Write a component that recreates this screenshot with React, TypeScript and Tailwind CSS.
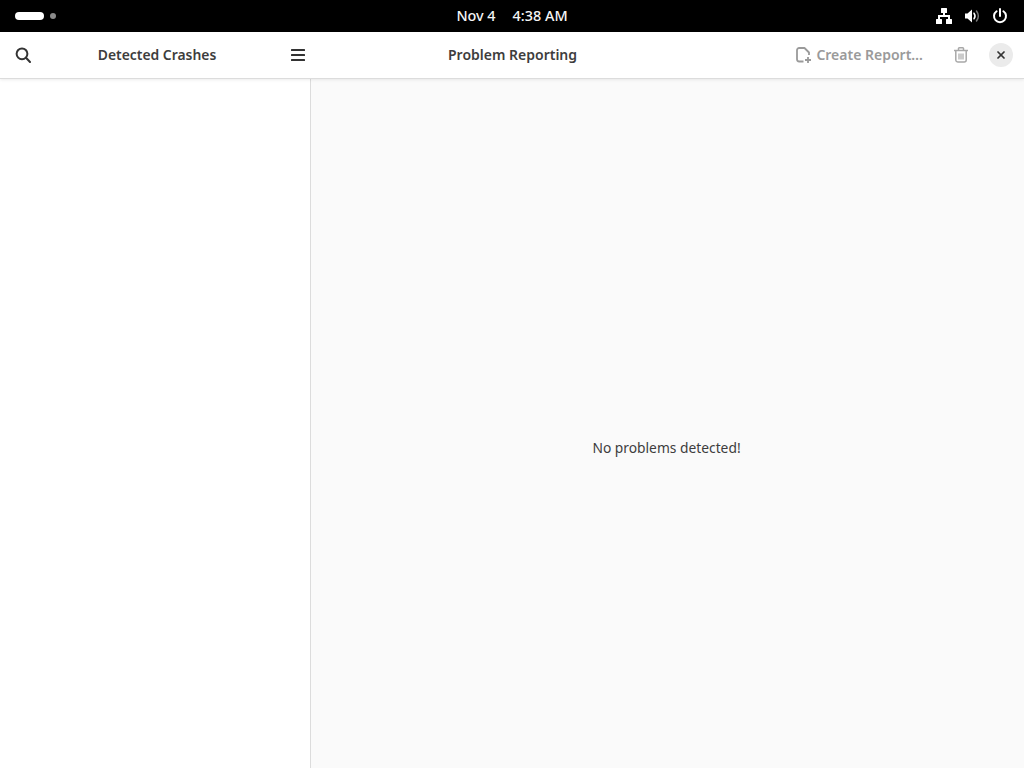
import { X } from "lucide-react";

const NetworkIcon = () => (
  <svg width="16" height="16" viewBox="0 0 16 16" fill="#fff">
    <rect x="5" y="0" width="6" height="5" rx="0.5" />
    <rect x="0" y="11" width="6" height="5" rx="0.5" />
    <rect x="10" y="11" width="6" height="5" rx="0.5" />
    <rect x="7" y="5" width="2" height="3" />
    <rect x="2" y="7" width="12" height="2" />
    <rect x="2" y="8" width="2" height="3" />
    <rect x="12" y="8" width="2" height="3" />
  </svg>
);

const VolumeIcon = () => (
  <svg width="16" height="16" viewBox="0 0 16 16" fill="none">
    <path d="M1 5.5h2.5L8 1.5v13l-4.5-4H1z" fill="#fff" />
    <path d="M10 5.2c1.2 1.6 1.2 4 0 5.6" stroke="#fff" strokeWidth="1.5" strokeLinecap="round" />
    <path d="M12.5 3c2.2 3 2.2 7 0 10" stroke="#777" strokeWidth="1.5" strokeLinecap="round" />
  </svg>
);

const PowerIcon = () => (
  <svg width="16" height="16" viewBox="0 0 16 16" fill="none" stroke="#fff" strokeWidth="2">
    <path d="M8 1v7" strokeLinecap="round" />
    <path d="M4.6 3.2a6 6 0 1 0 6.8 0" strokeLinecap="round" />
  </svg>
);

const SearchIcon = () => (
  <svg width="16" height="16" viewBox="0 0 16 16" fill="none" stroke="#333" strokeWidth="2">
    <circle cx="7" cy="6.8" r="5.4" />
    <path d="M11 10.8l4 4.2" strokeLinecap="round" />
  </svg>
);

const MenuIcon = () => (
  <svg width="14" height="12" viewBox="0 0 14 12" fill="#333">
    <rect y="0" width="14" height="2" rx="0.5" />
    <rect y="5" width="14" height="2" rx="0.5" />
    <rect y="10" width="14" height="2" rx="0.5" />
  </svg>
);

const NewReportIcon = () => (
  <svg width="16" height="16" viewBox="0 0 16 16" fill="none" stroke="#9a9a9a" strokeWidth="1.8">
    <path d="M7.5 14.5H3.2A2.2 2.2 0 0 1 1 12.3V3.2A2.2 2.2 0 0 1 3.2 1h5.3l4.5 4.5V8" strokeLinejoin="round" />
    <path d="M12 10v6M9 13h6" />
  </svg>
);

const TrashIcon = () => (
  <svg width="16" height="16" viewBox="0 0 16 16" fill="none" stroke="#a8a8a8" strokeWidth="1.5">
    <path d="M1 3.5h14" />
    <path d="M5.5 3V1.5a.7.7 0 0 1 .7-.7h3.6a.7.7 0 0 1 .7.7V3" />
    <path d="M2.8 4v9.2A2 2 0 0 0 4.8 15h6.4a2 2 0 0 0 2-2V4" />
    <path d="M6 6.5v6M8 6.5v6M10 6.5v6" strokeWidth="1.2" />
  </svg>
);

export default function App() {
  return (
    <div className="w-[1024px] h-[768px] overflow-hidden flex flex-col bg-white font-['Noto_Sans','Open_Sans',sans-serif] text-[#3d3d3d]">
      <div className="h-8 bg-black text-white grid grid-cols-[1fr_auto_1fr] items-center shrink-0">
        <div className="flex items-center gap-[6px] pl-[15px]">
          <div className="w-[29px] h-[8px] rounded-full bg-white" />
          <div className="w-[6px] h-[6px] rounded-full bg-[#8a8a8a]" />
        </div>
        <div className="flex gap-[17px] text-[14.4px] font-medium text-[#f5f5f5]">
          <span>Nov 4</span>
          <span>4:38 AM</span>
        </div>
        <div className="flex items-center justify-end gap-3 pr-4">
          <NetworkIcon />
          <VolumeIcon />
          <PowerIcon />
        </div>
      </div>
      <div className="h-[47px] flex shrink-0 border-b border-[#dcdcdc] shadow-[0_1px_3px_rgba(0,0,0,0.08)] z-10 bg-white">
        <div className="w-[311px] shrink-0 flex items-center justify-between pl-[15px]">
          <SearchIcon />
          <span className="text-[13.9px] font-semibold mr-[8px]">Detected Crashes</span>
          <button className="w-[20px] h-8 flex items-center justify-start">
            <MenuIcon />
          </button>
        </div>
        <div className="flex-1 flex items-center justify-between pl-[137px] pr-[11px]">
          <span className="text-[14px] font-semibold pb-[2px]">Problem Reporting</span>
          <div className="flex items-center">
            <NewReportIcon />
            <span className="ml-[4px] text-[14px] font-semibold text-[#9a9a9a] pb-[2px]">Create Report…</span>
            <div className="ml-[30px]">
              <TrashIcon />
            </div>
            <button className="ml-[20px] w-6 h-6 rounded-full bg-[#ebebeb] flex items-center justify-center">
              <X size={12} strokeWidth={3.5} className="text-[#333]" />
            </button>
          </div>
        </div>
      </div>
      <div className="flex-1 flex min-h-0">
        <div className="w-[311px] shrink-0 bg-white border-r border-[#dcdcdc]" />
        <div className="flex-1 bg-[#fafafa] flex items-center justify-center pt-[50px] pr-[2px]">
          <span className="text-[13.8px] text-[#3d3d3d]">No problems detected!</span>
        </div>
      </div>
    </div>
  );
}
